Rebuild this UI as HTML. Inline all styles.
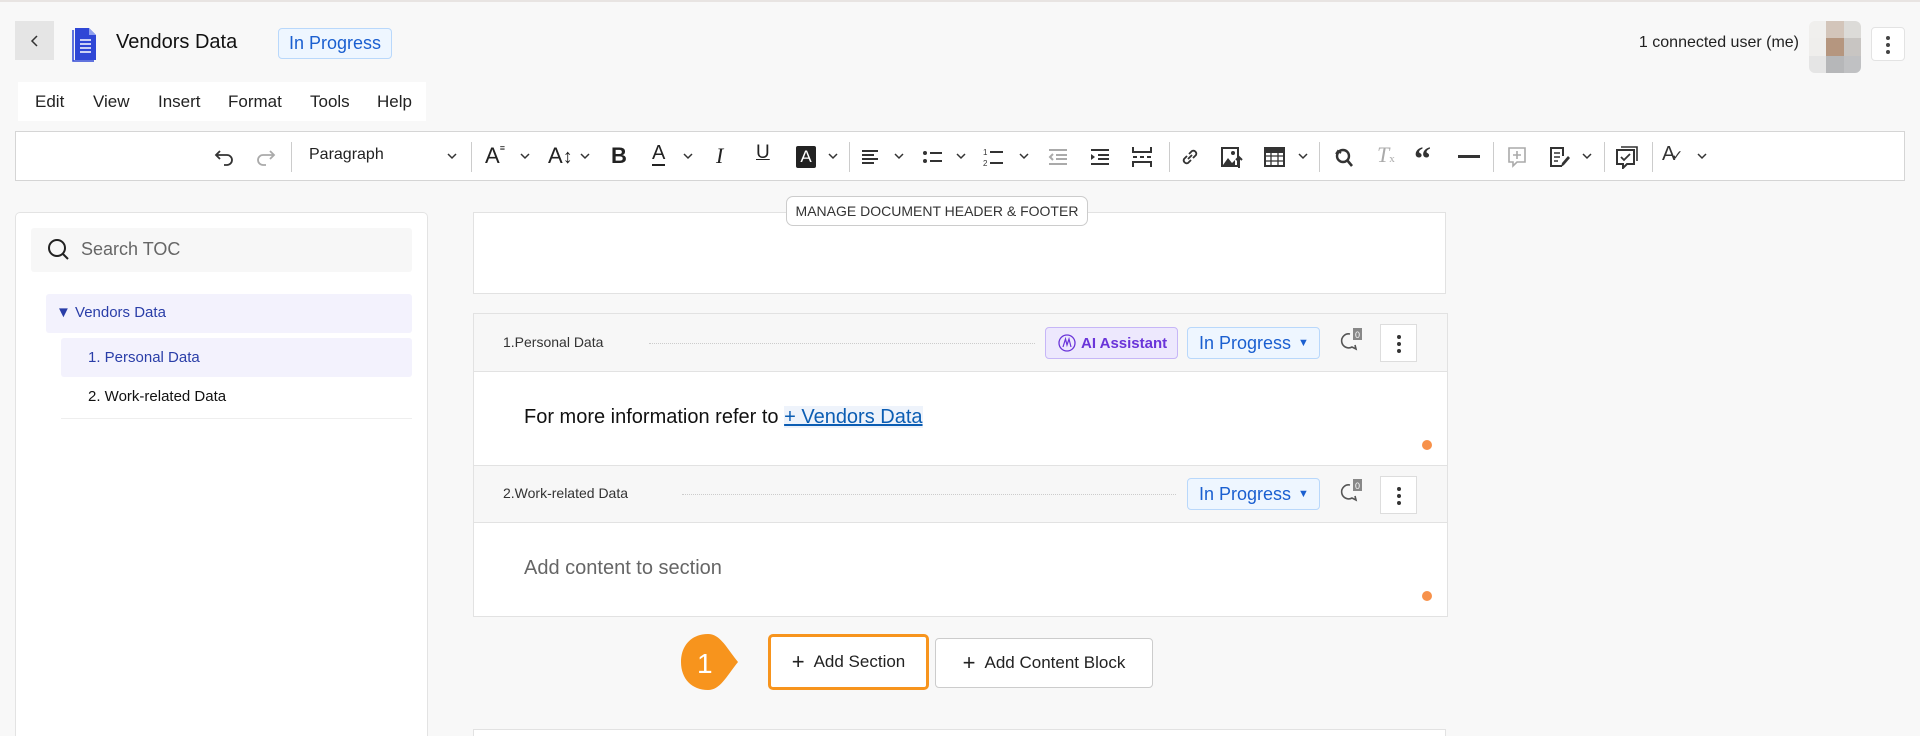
<!DOCTYPE html>
<html style="width:1920px;height:736px;overflow:hidden"><head><meta charset="utf-8"><style>
*{box-sizing:border-box;margin:0;padding:0}
body{width:1920px;height:736px;background:#f8f8f8;font-family:"Liberation Sans",sans-serif;position:relative;overflow:hidden;color:#222}
.a{position:absolute}
.ic{position:absolute;top:145px;width:24px;height:24px}
.chev{position:absolute;top:151px;width:10px;height:10px}
.sep{position:absolute;top:142px;width:1px;height:30px;background:#ccc}
.bp{position:absolute;background:#eef6ff;border:1px solid #b9d8fb;color:#1a5fd0;border-radius:4px;font-size:18px;display:flex;align-items:center}
</style></head><body>
<div class="a" style="left:0;top:0;width:1920px;height:2px;background:#e8e4e2"></div>
<div class="a" style="left:15px;top:21px;width:39px;height:39px;background:#e5e5e5;display:flex;align-items:center;justify-content:center">
<svg width="12" height="14" viewBox="0 0 12 14"><path d="M8 2 L3 7 L8 12" fill="none" stroke="#333" stroke-width="1.5"/></svg></div>
<svg class="a" style="left:71px;top:26px" width="28" height="36" viewBox="0 0 28 36"><path d="M4 2h14l7 7v25H4z" fill="#2f47d6"/><path d="M2 4v31h21" fill="none" stroke="#2f47d6" stroke-width="1.5"/><path d="M18 2v7h7" fill="#8fa0ef"/><path d="M9 14h11M9 18h11M9 22h11M9 26h11" stroke="#fff" stroke-width="1.6"/></svg>
<div class="a" style="left:116px;top:31px;font-size:20px;color:#111">Vendors Data</div>
<div class="bp" style="left:278px;top:28px;width:114px;height:31px;justify-content:center">In Progress</div>
<div class="a" style="left:1620px;top:34px;width:179px;text-align:right;font-size:16px;color:#222">1 connected user (me)</div>
<div class="a" style="left:1809px;top:21px;width:52px;height:52px;display:grid;grid-template-columns:repeat(3,1fr);border-radius:6px;overflow:hidden">
<div style="background:#f0efed"></div><div style="background:#d3c5ba"></div><div style="background:#dcdbd8"></div>
<div style="background:#efeeec"></div><div style="background:#b5967f"></div><div style="background:#c8c5c2"></div>
<div style="background:#e5e5e5"></div><div style="background:#b6b7b9"></div><div style="background:#c0c1c3"></div></div>
<div class="a" style="left:1871px;top:27px;width:34px;height:34px;background:#fff;border:1px solid #e3e3e3;border-radius:4px">
<svg width="34" height="34"><circle cx="16" cy="10" r="2" fill="#444"/><circle cx="16" cy="17" r="2" fill="#444"/><circle cx="16" cy="24" r="2" fill="#444"/></svg></div>
<div class="a" style="left:18px;top:82px;width:408px;height:39px;background:#fff;font-size:17px;color:#222">
<span class="a" style="left:17px;top:10px">Edit</span><span class="a" style="left:75px;top:10px">View</span><span class="a" style="left:140px;top:10px">Insert</span><span class="a" style="left:210px;top:10px">Format</span><span class="a" style="left:292px;top:10px">Tools</span><span class="a" style="left:359px;top:10px">Help</span></div>
<div class="a" style="left:15px;top:131px;width:1890px;height:50px;background:#fff;border:1px solid #d5d5d5"></div>
<svg class="ic" style="left:212px" viewBox="0 0 24 24"><path d="M8 6 L4 10 L8 14 M4 10 H15 a5 5 0 0 1 0 10 H12" fill="none" stroke="#333" stroke-width="1.8"/></svg>
<svg class="ic" style="left:254px" viewBox="0 0 24 24"><path d="M16 6 L20 10 L16 14 M20 10 H9 a5 5 0 0 0 0 10 H12" fill="none" stroke="#aaa" stroke-width="1.8"/></svg>
<div class="sep" style="left:291px"></div>
<div class="a" style="left:309px;top:146px;font-size:16px;color:#222">Paragraph</div>
<svg class="chev" style="left:447px" viewBox="0 0 10 10"><path d="M1 3l4 4 4-4" fill="none" stroke="#333" stroke-width="1.5"/></svg>
<div class="sep" style="left:471px"></div>
<div class="a" style="left:485px;top:143px;font-size:22px;color:#222">A<span style="font-size:9px;vertical-align:top">&#8801;</span></div>
<div class="a" style="left:548px;top:143px;font-size:22px;color:#222">A<span style="font-size:20px">&#8597;</span></div>
<div class="a" style="left:611px;top:143px;font-size:22px;font-weight:bold;color:#222">B</div>
<div class="a" style="left:652px;top:142px;font-size:20px;color:#222;border-bottom:2px solid #222;line-height:22px">A</div>
<div class="a" style="left:716px;top:143px;font-size:22px;font-style:italic;font-family:'Liberation Serif',serif;color:#222">I</div>
<div class="a" style="left:756px;top:142px;font-size:19px;color:#222;text-decoration:underline">U</div>
<div class="a" style="left:796px;top:146px;width:20px;height:22px;background:#222;color:#fff;font-size:17px;text-align:center;line-height:22px;border-radius:2px">A</div>
<svg class="chev" style="left:520px" viewBox="0 0 10 10"><path d="M1 3l4 4 4-4" fill="none" stroke="#333" stroke-width="1.5"/></svg>
<svg class="chev" style="left:580px" viewBox="0 0 10 10"><path d="M1 3l4 4 4-4" fill="none" stroke="#333" stroke-width="1.5"/></svg>
<svg class="chev" style="left:683px" viewBox="0 0 10 10"><path d="M1 3l4 4 4-4" fill="none" stroke="#333" stroke-width="1.5"/></svg>
<svg class="chev" style="left:828px" viewBox="0 0 10 10"><path d="M1 3l4 4 4-4" fill="none" stroke="#333" stroke-width="1.5"/></svg>
<div class="sep" style="left:849px"></div>
<svg class="ic" style="left:859px" viewBox="0 0 24 24"><path d="M3 6h16M3 10h12M3 14h16M3 18h12" stroke="#333" stroke-width="2"/></svg>
<svg class="chev" style="left:894px" viewBox="0 0 10 10"><path d="M1 3l4 4 4-4" fill="none" stroke="#333" stroke-width="1.5"/></svg>
<svg class="ic" style="left:921px" viewBox="0 0 24 24"><circle cx="4" cy="8" r="2" fill="#333"/><circle cx="4" cy="16" r="2" fill="#333"/><path d="M9 8h12M9 16h12" stroke="#333" stroke-width="2"/></svg>
<svg class="chev" style="left:956px" viewBox="0 0 10 10"><path d="M1 3l4 4 4-4" fill="none" stroke="#333" stroke-width="1.5"/></svg>
<svg class="ic" style="left:982px" viewBox="0 0 24 24"><text x="1" y="10" font-size="8" fill="#333" font-family="Liberation Sans">1</text><text x="1" y="21" font-size="8" fill="#333" font-family="Liberation Sans">2</text><path d="M8 7h13M8 18h13" stroke="#333" stroke-width="2"/></svg>
<svg class="chev" style="left:1019px" viewBox="0 0 10 10"><path d="M1 3l4 4 4-4" fill="none" stroke="#333" stroke-width="1.5"/></svg>
<svg class="ic" style="left:1046px" viewBox="0 0 24 24"><path d="M3 5h18M10 10h11M10 14h11M3 19h18M7 9l-3 3 3 3" fill="none" stroke="#aaa" stroke-width="2"/></svg>
<svg class="ic" style="left:1088px" viewBox="0 0 24 24"><path d="M3 5h18M10 10h11M10 14h11M3 19h18" stroke="#333" stroke-width="2"/><path d="M3 9l4 3-4 3z" fill="#333"/></svg>
<svg class="ic" style="left:1130px" viewBox="0 0 24 24"><path d="M3 2v5h18V2M3 22v-5h18v5M3 12h4M10 12h4M17 12h4" fill="none" stroke="#333" stroke-width="2"/></svg>
<div class="sep" style="left:1169px"></div>
<svg class="ic" style="left:1178px" viewBox="0 0 24 24"><path d="M10 14l4-4M9 11l-3 3a3 3 0 0 0 4 4l3-3M15 13l3-3a3 3 0 0 0-4-4l-3 3" fill="none" stroke="#333" stroke-width="1.8"/></svg>
<svg class="ic" style="left:1220px" viewBox="0 0 24 24"><rect x="2" y="3" width="16" height="18" fill="none" stroke="#333" stroke-width="2"/><path d="M3 20l5-7 4 5 3-3v6z" fill="#333"/><circle cx="13" cy="8" r="2" fill="#333"/><path d="M19 23V12M16 15l3-3 3 3" fill="none" stroke="#333" stroke-width="2"/></svg>
<svg class="ic" style="left:1263px" viewBox="0 0 24 24"><rect x="2" y="3" width="19" height="18" fill="none" stroke="#333" stroke-width="2"/><path d="M2 6h19" stroke="#333" stroke-width="4"/><path d="M2 11h19M2 16h19M8 5v16M15 5v16" stroke="#333" stroke-width="1.3"/></svg>
<svg class="chev" style="left:1298px" viewBox="0 0 10 10"><path d="M1 3l4 4 4-4" fill="none" stroke="#333" stroke-width="1.5"/></svg>
<div class="sep" style="left:1319px"></div>
<svg class="ic" style="left:1331px" viewBox="0 0 24 24"><circle cx="12" cy="11" r="6" fill="none" stroke="#333" stroke-width="2.4"/><path d="M16 15l5 6" stroke="#333" stroke-width="2.6"/><path d="M5 9l2-3 3 2" fill="none" stroke="#333" stroke-width="2"/></svg>
<div class="a" style="left:1377px;top:142px;font-size:22px;font-style:italic;font-family:'Liberation Serif',serif;color:#aaa">T<span style="font-size:11px;font-style:normal">x</span></div>
<div class="a" style="left:1414px;top:140px;font-size:34px;font-weight:bold;color:#333;font-family:'Liberation Serif',serif;line-height:40px">&#8220;</div>
<div class="a" style="left:1458px;top:155px;width:22px;height:3px;background:#333"></div>
<div class="sep" style="left:1493px"></div>
<svg class="ic" style="left:1505px" viewBox="0 0 24 24"><path d="M4 3h16v14h-8l-4 4v-4H4z" fill="none" stroke="#aaa" stroke-width="1.6"/><path d="M12 6v8M8 10h8" stroke="#aaa" stroke-width="1.6"/></svg>
<svg class="ic" style="left:1547px" viewBox="0 0 24 24"><path d="M15 21H4V3h12v8" fill="none" stroke="#333" stroke-width="2"/><path d="M7 8h6M7 12h6M7 16h4" stroke="#333" stroke-width="1.6"/><path d="M14 22l1-4 6-7 2 2-6 7z" fill="#333"/></svg>
<svg class="chev" style="left:1582px" viewBox="0 0 10 10"><path d="M1 3l4 4 4-4" fill="none" stroke="#333" stroke-width="1.5"/></svg>
<div class="sep" style="left:1604px"></div>
<svg class="ic" style="left:1615px" viewBox="0 0 24 24"><path d="M6 2h16v14" fill="none" stroke="#333" stroke-width="1.6"/><path d="M2 5h17v14h-7l-4 4v-4H2z" fill="none" stroke="#333" stroke-width="2"/><path d="M6 12l3 3 6-6" fill="none" stroke="#333" stroke-width="1.8"/></svg>
<div class="sep" style="left:1652px"></div>
<div class="a" style="left:1662px;top:143px;font-size:20px;color:#333">A<span style="font-size:14px;margin-left:-4px">&#10003;</span></div>
<svg class="chev" style="left:1697px" viewBox="0 0 10 10"><path d="M1 3l4 4 4-4" fill="none" stroke="#333" stroke-width="1.5"/></svg>
<div class="a" style="left:15px;top:212px;width:413px;height:524px;background:#fff;border:1px solid #e3e3e3;border-bottom:none;border-radius:5px 5px 0 0"></div>
<div class="a" style="left:31px;top:228px;width:381px;height:44px;background:#f7f7f7;border-radius:3px"></div>
<svg class="a" style="left:47px;top:238px" width="24" height="24" viewBox="0 0 24 24"><circle cx="10" cy="10" r="8" fill="none" stroke="#222" stroke-width="2"/><path d="M16 16l5 5" stroke="#222" stroke-width="2"/></svg>
<div class="a" style="left:81px;top:239px;font-size:18px;color:#666">Search TOC</div>
<div class="a" style="left:46px;top:294px;width:366px;height:39px;background:#f3f2fd;border-radius:3px"></div>
<div class="a" style="left:56px;top:304px;font-size:15px;color:#2a3ea8">&#9660; Vendors Data</div>
<div class="a" style="left:61px;top:338px;width:351px;height:39px;background:#f3f2fd;border-radius:3px"></div>
<div class="a" style="left:88px;top:349px;font-size:15px;color:#2a3ea8">1. Personal Data</div>
<div class="a" style="left:88px;top:388px;font-size:15px;color:#111">2. Work-related Data</div>
<div class="a" style="left:61px;top:418px;width:351px;height:1px;background:#eee"></div>
<div class="a" style="left:473px;top:212px;width:973px;height:82px;background:#fff;border:1px solid #e2e2e2"></div>
<div class="a" style="left:786px;top:196px;width:302px;height:30px;background:#fff;border:1px solid #ccc;border-radius:7px;font-size:14px;color:#333;text-align:center;line-height:28px">MANAGE DOCUMENT HEADER &amp; FOOTER</div>
<div class="a" style="left:473px;top:313px;width:975px;height:153px;background:#fff;border:1px solid #e2e2e2"></div>
<div class="a" style="left:474px;top:314px;width:973px;height:58px;background:#f7f7f7;border-bottom:1px solid #e2e2e2"></div>
<div class="a" style="left:503px;top:334px;font-size:14px;color:#333">1.Personal Data</div>
<div class="a" style="left:649px;top:343px;width:386px;border-top:1px dotted #ccc"></div>
<div class="a" style="left:1045px;top:327px;width:133px;height:32px;background:#ede8fd;border:1px solid #c6b6f7;border-radius:4px;color:#6a34d9;font-size:15px;font-weight:bold;display:flex;align-items:center;padding-left:12px"><svg width="18" height="18" viewBox="0 0 18 18" style="margin-right:5px"><circle cx="9" cy="9" r="8" fill="none" stroke="#6a34d9" stroke-width="1.3"/><path d="M5 13L7.5 5 9 11 11 5 13 13" fill="none" stroke="#6a34d9" stroke-width="1.2"/></svg>AI Assistant</div>
<div class="bp" style="left:1187px;top:327px;width:133px;height:32px;padding-left:11px">In Progress <span style="font-size:11px;margin-left:7px">&#9660;</span></div>
<svg class="a" style="left:1337px;top:326px" width="30" height="30" viewBox="0 0 30 30"><path d="M13 8a7 7 0 1 0 2 13l4 2-1-4" fill="none" stroke="#555" stroke-width="1.6"/><rect x="16" y="2" width="9" height="12" fill="#888"/><text x="18" y="12" font-size="9" fill="#fff" font-family="Liberation Sans">0</text></svg>
<div class="a" style="left:1380px;top:324px;width:37px;height:38px;background:#fff;border:1px solid #ddd"><svg width="37" height="38"><circle cx="18" cy="12" r="2" fill="#333"/><circle cx="18" cy="19" r="2" fill="#333"/><circle cx="18" cy="26" r="2" fill="#333"/></svg></div>
<div class="a" style="left:524px;top:406px;font-size:20px;color:#111">For more information refer to <span style="color:#0b5db3;text-decoration:underline;background:#eef3fb">+ Vendors Data</span></div>
<div class="a" style="left:1422px;top:440px;width:10px;height:10px;border-radius:50%;background:#f7914a"></div>
<div class="a" style="left:473px;top:465px;width:975px;height:152px;background:#fff;border:1px solid #e2e2e2"></div>
<div class="a" style="left:474px;top:466px;width:973px;height:57px;background:#f7f7f7;border-bottom:1px solid #e2e2e2"></div>
<div class="a" style="left:503px;top:485px;font-size:14px;color:#333">2.Work-related Data</div>
<div class="a" style="left:682px;top:494px;width:494px;border-top:1px dotted #ccc"></div>
<div class="bp" style="left:1187px;top:478px;width:133px;height:32px;padding-left:11px">In Progress <span style="font-size:11px;margin-left:7px">&#9660;</span></div>
<svg class="a" style="left:1337px;top:477px" width="30" height="30" viewBox="0 0 30 30"><path d="M13 8a7 7 0 1 0 2 13l4 2-1-4" fill="none" stroke="#555" stroke-width="1.6"/><rect x="16" y="2" width="9" height="12" fill="#888"/><text x="18" y="12" font-size="9" fill="#fff" font-family="Liberation Sans">0</text></svg>
<div class="a" style="left:1380px;top:476px;width:37px;height:38px;background:#fff;border:1px solid #ddd"><svg width="37" height="38"><circle cx="18" cy="12" r="2" fill="#333"/><circle cx="18" cy="19" r="2" fill="#333"/><circle cx="18" cy="26" r="2" fill="#333"/></svg></div>
<div class="a" style="left:524px;top:557px;font-size:20px;color:#666">Add content to section</div>
<div class="a" style="left:1422px;top:591px;width:10px;height:10px;border-radius:50%;background:#f7914a"></div>
<svg class="a" style="left:676px;top:633px" width="82" height="58" viewBox="0 0 82 58"><path d="M32 1 C44 1 50 14 62 29 C50 44 44 57 32 57 C16 57 5 46 5 29 C5 12 16 1 32 1Z" fill="#f7941d"/><text x="21" y="40" font-size="28" fill="#fff" font-family="Liberation Sans">1</text></svg>
<div class="a" style="left:768px;top:634px;width:161px;height:56px;background:#fff;border:3px solid #f7941d;border-radius:5px;font-size:17px;color:#222;display:flex;align-items:center;justify-content:center"><span style="font-size:22px;font-weight:300;margin-right:9px">+</span>Add Section</div>
<div class="a" style="left:935px;top:638px;width:218px;height:50px;background:#fff;border:1px solid #ccc;border-radius:4px;font-size:17px;color:#222;display:flex;align-items:center;justify-content:center"><span style="font-size:22px;font-weight:300;margin-right:9px">+</span>Add Content Block</div>
<div class="a" style="left:473px;top:729px;width:973px;height:7px;background:#fff;border:1px solid #e2e2e2;border-bottom:none"></div>
</body></html>
